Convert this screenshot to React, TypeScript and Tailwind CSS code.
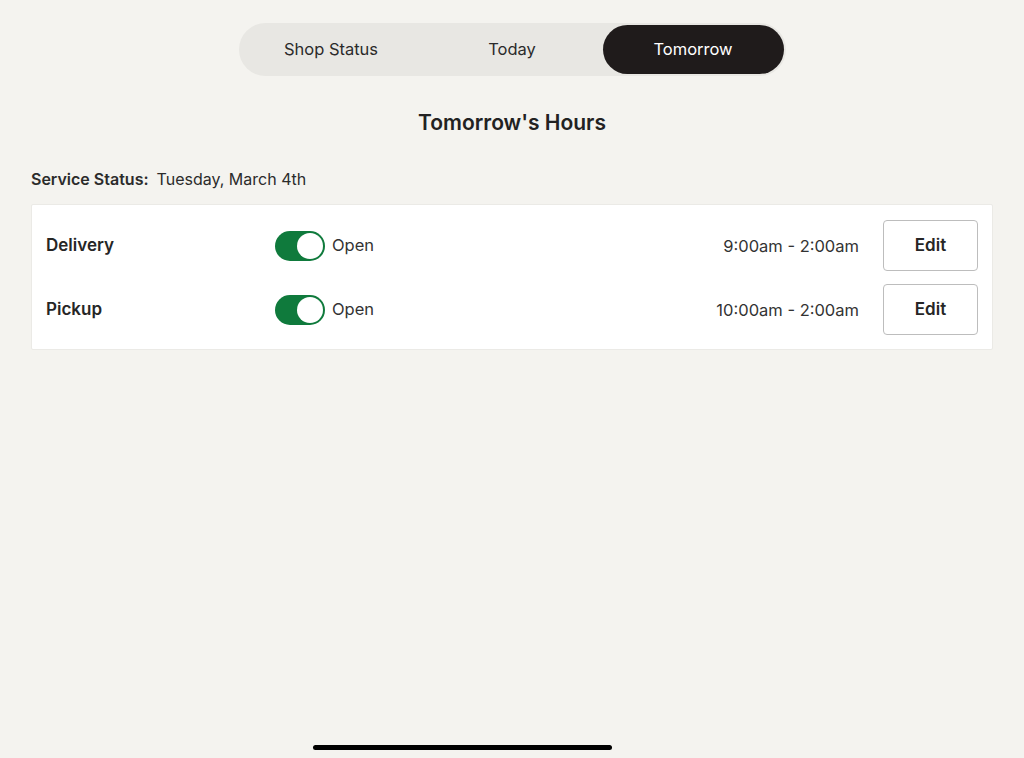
import React from "react";

function Toggle() {
  return (
    <div className="w-[50px] h-[30px] rounded-full bg-[#0f7a3c] flex items-center justify-end pr-[2px]">
      <div className="w-[26px] h-[26px] rounded-full bg-white" />
    </div>
  );
}

function Row({ label, hours }: { label: string; hours: string }) {
  return (
    <div className="flex items-center h-[51px]">
      <div className="w-[229px] text-[17px] font-semibold text-[#262626]">{label}</div>
      <div className="flex items-center gap-[7px]">
        <Toggle />
        <span className="text-[16.5px] text-[#333333]">Open</span>
      </div>
      <div className="flex-1 text-right text-[16.5px] leading-[24px] text-[#333333] pr-[24px]">{hours}</div>
      <button className="w-[95px] h-[51px] rounded-[4px] border border-[#bdbdbd] bg-white text-[17px] font-semibold text-[#262626]">
        Edit
      </button>
    </div>
  );
}

export default function App() {
  return (
    <div
      className="w-[1024px] h-[758px] bg-[#f4f3ef] flex flex-col items-center overflow-hidden"
      style={{ fontFamily: "Inter, 'Noto Sans', sans-serif" }}
    >
      <div className="mt-[23px] w-[547px] h-[53px] rounded-full bg-[#e8e7e3] flex items-center p-[2px]">
        <div className="flex-1 h-full flex items-center justify-center text-[16.5px] text-[#2b2b2b]">Shop Status</div>
        <div className="flex-1 h-full flex items-center justify-center text-[16.5px] text-[#2b2b2b]">Today</div>
        <div className="flex-1 h-full flex items-center justify-center rounded-full bg-[#1f1b1b] text-[16.5px] text-white">Tomorrow</div>
      </div>
      <h1 className="mt-[32px] text-[21px] font-semibold text-[#222222] leading-[30px]">Tomorrow's Hours</h1>
      <div className="self-stretch pl-[31px] pr-[31px] mt-[29px]">
        <div className="text-[16px] text-[#2b2b2b] leading-[24px]">
          <span className="font-semibold">Service Status:</span>
          <span className="ml-[8px]">Tuesday, March 4th</span>
        </div>
        <div className="mt-[13px] bg-white border border-[#ebeae6] rounded-[2px] pl-[14px] pr-[14px] pt-[15px] pb-[14px] flex flex-col gap-[13px]">
          <Row label="Delivery" hours="9:00am - 2:00am" />
          <Row label="Pickup" hours="10:00am - 2:00am" />
        </div>
      </div>
      <div className="flex-1" />
      <div className="self-start ml-[313px] mb-[8px] w-[299px] h-[5px] rounded-full bg-black" />
    </div>
  );
}
